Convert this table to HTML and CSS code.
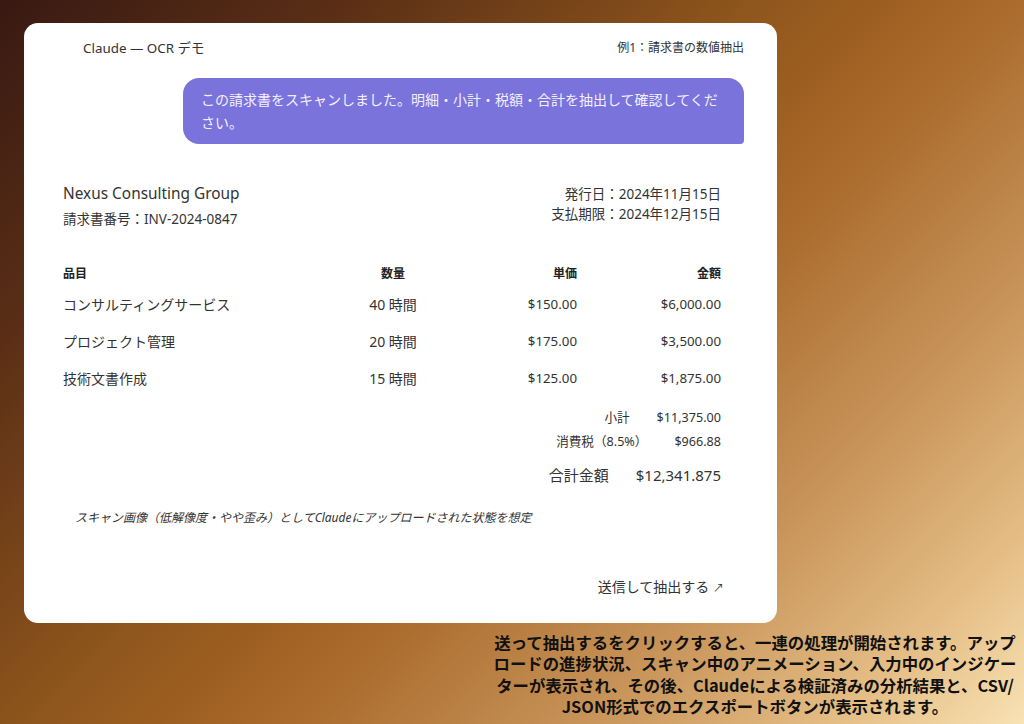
FILE: index.html
```html
<!DOCTYPE html>
<html lang="ja">
<head>
<meta charset="utf-8">
<title>Claude OCR デモ</title>
<link rel="stylesheet" href="styles.css">
</head>
<body>
<div class="page">
  <div class="card">
    <div class="card-header">
      <span class="title">Claude — OCR デモ</span>
      <span class="example">例1：請求書の数値抽出</span>
    </div>
    <div class="bubble">この請求書をスキャンしました。明細・小計・税額・合計を抽出して確認してください。</div>

    <div class="invoice">
      <div class="inv-head">
        <div class="inv-left">
          <div class="company">Nexus Consulting Group</div>
          <div class="inv-no">請求書番号：INV-2024-0847</div>
        </div>
        <div class="inv-right">
          <div>発行日：2024年11月15日</div>
          <div>支払期限：2024年12月15日</div>
        </div>
      </div>

      <div class="table">
        <div class="row head">
          <span class="c-item">品目</span>
          <span class="c-qty">数量</span>
          <span class="c-price">単価</span>
          <span class="c-amt">金額</span>
        </div>
        <div class="rows">
          <div class="row">
            <span class="c-item">コンサルティングサービス</span>
            <span class="c-qty">40 時間</span>
            <span class="c-price">$150.00</span>
            <span class="c-amt">$6,000.00</span>
          </div>
          <div class="row">
            <span class="c-item">プロジェクト管理</span>
            <span class="c-qty">20 時間</span>
            <span class="c-price">$175.00</span>
            <span class="c-amt">$3,500.00</span>
          </div>
          <div class="row">
            <span class="c-item">技術文書作成</span>
            <span class="c-qty">15 時間</span>
            <span class="c-price">$125.00</span>
            <span class="c-amt">$1,875.00</span>
          </div>
        </div>
      </div>

      <div class="totals">
        <div class="t-row"><span>小計</span><span>$11,375.00</span></div>
        <div class="t-row"><span>消費税（8.5%）</span><span>$966.88</span></div>
        <div class="t-row grand"><span>合計金額</span><span>$12,341.875</span></div>
      </div>

      <div class="note">スキャン画像（低解像度・やや歪み）としてClaudeにアップロードされた状態を想定</div>
    </div>

    <div class="send">送信して抽出する <span class="arrow">↗</span></div>
  </div>

  <p class="caption">送って抽出するをクリックすると、一連の処理が開始されます。アップ<br>ロードの進捗状況、スキャン中のアニメーション、入力中のインジケー<br>ターが表示され、その後、Claudeによる検証済みの分析結果と、CSV/<br>JSON形式でのエクスポートボタンが表示されます。</p>
</div>
</body>
</html>
```

FILE: styles.css
```css
html, body {
  margin: 0;
  padding: 0;
}

body {
  width: 1024px;
  height: 724px;
  overflow: hidden;
  background: linear-gradient(135deg,
    #381912 0%,
    #5b2f16 20%,
    #8c541c 42%,
    #9c5e20 50%,
    #aa6b2c 58%,
    #c8945a 75%,
    #e6c088 90%,
    #f8e2b4 100%);
  font-family: "Noto Sans", "Noto Sans CJK JP", sans-serif;
  color: #333;
}

.page {
  display: flex;
  flex-direction: column;
  padding: 23px 0 0 24px;
}

.card {
  width: 753px;
  height: 600px;
  box-sizing: border-box;
  background: #fff;
  border-radius: 14px;
  padding: 0 33px 0 39px;
  display: flex;
  flex-direction: column;
}

.card-header {
  height: 48px;
  display: flex;
  align-items: center;
  justify-content: space-between;
  padding-left: 20px;
}

.title {
  font-size: 13.4px;
  color: #333;
}

.example {
  font-size: 12px;
  color: #333;
}

.bubble {
  margin-top: 7px;
  margin-left: auto;
  width: 561px;
  box-sizing: border-box;
  padding: 10px 18px;
  background: #7b73dc;
  color: #f2f0ff;
  font-size: 14px;
  line-height: 23px;
  border-radius: 16px 16px 4px 16px;
}

.invoice {
  padding-right: 23px;
}

.inv-head {
  margin-top: 40px;
  display: flex;
  justify-content: space-between;
}

.company {
  font-size: 15.4px;
  line-height: 20px;
  color: #333;
}

.inv-no {
  margin-top: 3px;
  font-size: 13.5px;
  line-height: 24px;
}

.inv-right {
  text-align: right;
  font-size: 13.5px;
  line-height: 20px;
}

.table {
  margin-top: 31px;
}

.row {
  display: grid;
  grid-template-columns: 260px 140px 114px 144px;
  font-size: 14px;
  line-height: 37px;
}

.row.head {
  font-size: 12px;
  font-weight: bold;
  line-height: 24px;
  color: #222;
}

.rows {
  margin-top: 0;
}

.c-qty {
  text-align: center;
}

.c-price,
.c-amt {
  text-align: right;
}

.row:not(.head) .c-price,
.row:not(.head) .c-amt {
  font-size: 13.3px;
}

.totals {
  margin-top: 9px;
  display: flex;
  flex-direction: column;
}

.t-row {
  display: flex;
  justify-content: flex-end;
  gap: 27px;
  font-size: 12.6px;
  line-height: 24px;
}

.t-row.grand {
  margin-top: 9px;
  font-size: 15px;
}

.note {
  margin-top: 22px;
  padding-left: 12px;
  font-size: 12px;
  line-height: 18px;
  font-style: italic;
  color: #333;
}

.send {
  margin-top: auto;
  margin-bottom: 25px;
  align-self: flex-end;
  padding-right: 20px;
  font-size: 14px;
  line-height: 20px;
  color: #333;
}

.arrow {
  font-size: 11px;
}

.caption {
  margin: 9px 4px 0 0;
  align-self: flex-end;
  width: 530px;
  text-align: center;
  font-family: "Noto Sans CJK JP", sans-serif;
  font-weight: bold;
  font-size: 16.4px;
  line-height: 21.3px;
  color: #111;
}
```
